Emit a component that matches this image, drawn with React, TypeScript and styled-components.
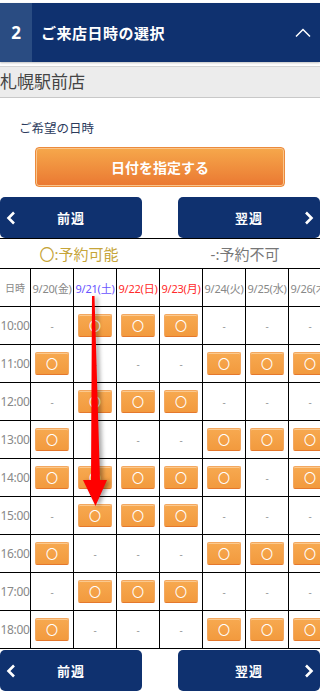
import styled, { createGlobalStyle } from 'styled-components';

const GlobalStyle = createGlobalStyle`
    html, body {
        margin: 0;
        padding: 0;
        background: #fff;
    }
    body {
        font-family: "Noto Sans", "Noto Sans CJK JP", sans-serif;
        width: 320px;
        overflow-x: hidden;
    }
`;

type Day = { label: string; tone: 'normal' | 'sat' | 'holiday' };

const days: Day[] = [
    { label: '9/20(金)', tone: 'normal' },
    { label: '9/21(土)', tone: 'sat' },
    { label: '9/22(日)', tone: 'holiday' },
    { label: '9/23(月)', tone: 'holiday' },
    { label: '9/24(火)', tone: 'normal' },
    { label: '9/25(水)', tone: 'normal' },
    { label: '9/26(木)', tone: 'normal' },
];

// 1 = 予約可能, 0 = 予約不可
const slots: { time: string; open: number[] }[] = [
    { time: '10:00', open: [0, 1, 1, 1, 0, 0, 0] },
    { time: '11:00', open: [1, 0, 0, 0, 1, 1, 1] },
    { time: '12:00', open: [0, 1, 1, 1, 0, 0, 0] },
    { time: '13:00', open: [1, 0, 0, 0, 1, 1, 1] },
    { time: '14:00', open: [1, 1, 1, 1, 1, 0, 1] },
    { time: '15:00', open: [0, 1, 1, 1, 0, 0, 0] },
    { time: '16:00', open: [1, 0, 0, 0, 1, 1, 1] },
    { time: '17:00', open: [0, 1, 1, 1, 0, 0, 0] },
    { time: '18:00', open: [1, 0, 0, 0, 1, 1, 1] },
];

const WeekNav = ({ gap }: { gap: number }) => (
    <NavRow gap={gap}>
        <NavButton type="button">
            <NavIcon side="left" width="10" height="14" viewBox="0 0 10 14">
                <polyline points="8,1.5 2.5,7 8,12.5" />
            </NavIcon>
            前週
        </NavButton>
        <NavButton type="button">
            翌週
            <NavIcon side="right" width="10" height="14" viewBox="0 0 10 14">
                <polyline points="2,1.5 7.5,7 2,12.5" />
            </NavIcon>
        </NavButton>
    </NavRow>
);

const App = () => {
    return (
        <Page>
            <GlobalStyle />
            <Header>
                <StepNo>2</StepNo>
                <HeaderTitle>ご来店日時の選択</HeaderTitle>
                <svg width="16" height="10" viewBox="0 0 16 10" fill="none" stroke="#fff" strokeWidth="1.5">
                    <polyline points="1,8.5 8,1.5 15,8.5" />
                </svg>
            </Header>

            <StoreBar>札幌駅前店</StoreBar>

            <FieldLabel>ご希望の日時</FieldLabel>
            <DateButton type="button">日付を指定する</DateButton>

            <WeekNav gap={10} />

            <TableArea>
                <Legend>
                    <LegendItem tone="ok">〇:予約可能</LegendItem>
                    <LegendItem tone="ng">-:予約不可</LegendItem>
                </Legend>
                <Grid>
                    <TimeCell head>日時</TimeCell>
                    {days.map((d) => (
                        <DayCell key={d.label} tone={d.tone}>{d.label}</DayCell>
                    ))}
                    {slots.map((s) => (
                        <Row key={s.time}>
                            <TimeCell>{s.time}</TimeCell>
                            {s.open.map((o, i) => (
                                <SlotCell key={i}>
                                    {o ? <SlotButton type="button">〇</SlotButton> : <Dash>-</Dash>}
                                </SlotCell>
                            ))}
                        </Row>
                    ))}
                </Grid>
                <Arrow width="40" height="220" viewBox="0 0 40 220">
                    <polygon points="11,0 13.5,0 19,184 26,184 14.5,210 2,184 10,184" fill="#ff0000" />
                </Arrow>
            </TableArea>

            <WeekNav gap={1} />
        </Page>
    );
};

export default App;

const Page = styled.div`
    width: 320px;
    padding-top: 3px;
`;

const Header = styled.div`
    display: flex;
    align-items: center;
    height: 59px;
    background: #0f316f;
    color: #fff;
    padding-right: 9px;
    box-shadow: 0 1px 2px rgba(0, 0, 0, 0.25);
`;

const StepNo = styled.div`
    width: 32px;
    height: 100%;
    display: flex;
    align-items: center;
    justify-content: center;
    background: #2a4c82;
    font-size: 17px;
    font-weight: 700;
`;

const HeaderTitle = styled.div`
    flex: 1;
    padding-left: 9px;
    font-size: 15px;
    font-weight: 700;
    letter-spacing: 0.5px;
`;

const StoreBar = styled.div`
    margin-top: 4px;
    height: 30px;
    line-height: 30px;
    background: #ececec;
    border-top: 1px solid #d4d4d4;
    border-bottom: 1px solid #c8c8c8;
    color: #444;
    font-size: 17px;
    white-space: nowrap;
`;

const FieldLabel = styled.div`
    margin: 22px 0 0 19px;
    font-size: 12.5px;
    color: #2b3a5c;
    line-height: 18px;
`;

const DateButton = styled.button`
    display: block;
    margin: 9px 0 0 35px;
    width: 250px;
    height: 40px;
    border: 1px solid #ec8a3c;
    border-radius: 4px;
    background: linear-gradient(#f6a84b, #ea7832);
    box-shadow: inset 0 0 0 1px #f9c58c;
    color: #fff;
    font-family: inherit;
    font-size: 14px;
    font-weight: 700;
    cursor: pointer;
`;

const NavRow = styled.div<{ gap: number }>`
    display: flex;
    justify-content: space-between;
    margin-top: ${(p) => p.gap}px;
`;

const NavButton = styled.button`
    position: relative;
    width: 142px;
    height: 41px;
    border: none;
    border-radius: 5px;
    background: #0f316f;
    color: #fff;
    font-family: inherit;
    font-size: 13px;
    font-weight: 700;
    letter-spacing: 1px;
    cursor: pointer;
`;

const NavIcon = styled.svg<{ side: 'left' | 'right' }>`
    position: absolute;
    top: 14px;
    ${(p) => (p.side === 'left' ? 'left: 6px;' : 'right: 6px;')}
    fill: none;
    stroke: #fff;
    stroke-width: 2.6;
`;

const TableArea = styled.div`
    position: relative;
    width: 320px;
    overflow: hidden;
    border-top: 1px solid #000;
`;

const Legend = styled.div`
    display: flex;
    width: 332px;
    height: 29px;
    border-bottom: 1px solid #000;
`;

const LegendItem = styled.div<{ tone: 'ok' | 'ng' }>`
    flex: 1;
    display: flex;
    align-items: center;
    justify-content: center;
    padding-right: 8px;
    font-size: 15px;
    color: ${(p) => (p.tone === 'ok' ? '#c6a53a' : '#777')};
`;

const Grid = styled.div`
    display: grid;
    width: 332px;
    grid-template-columns: 31px repeat(7, 43px);
    grid-auto-rows: 38px;
`;

const Row = styled.div`
    display: contents;
`;

const Cell = styled.div`
    box-sizing: border-box;
    border-right: 1px solid #000;
    border-bottom: 1px solid #000;
    display: flex;
    align-items: center;
    justify-content: center;
    overflow: hidden;
    white-space: nowrap;
`;

const TimeCell = styled(Cell)<{ head?: boolean }>`
    font-size: ${(p) => (p.head ? '10px' : '12px')};
    color: #888;
    letter-spacing: ${(p) => (p.head ? '0' : '-0.3px')};
`;

const DayCell = styled(Cell)<{ tone: Day['tone'] }>`
    font-size: 11px;
    letter-spacing: -0.2px;
    color: ${(p) => (p.tone === 'sat' ? '#6a55ff' : p.tone === 'holiday' ? '#ff2a2a' : '#888')};
`;

const SlotCell = styled(Cell)``;

const SlotButton = styled.button`
    width: 34px;
    height: 23px;
    padding: 0;
    border: 1px solid #f3a860;
    border-bottom-color: #e5782c;
    border-radius: 2px;
    background: linear-gradient(#f7a950, #f29a3e);
    box-shadow: inset 0 1px 0 #fbc98e;
    color: #fff;
    font-family: "Noto Sans CJK JP", sans-serif;
    font-size: 12px;
    line-height: 20px;
    cursor: pointer;
`;

const Dash = styled.span`
    color: #999;
    font-size: 10px;
`;

const Arrow = styled.svg`
    position: absolute;
    left: 81px;
    top: 57px;
    filter: drop-shadow(3px 1px 2px rgba(0, 0, 0, 0.35));
`;
